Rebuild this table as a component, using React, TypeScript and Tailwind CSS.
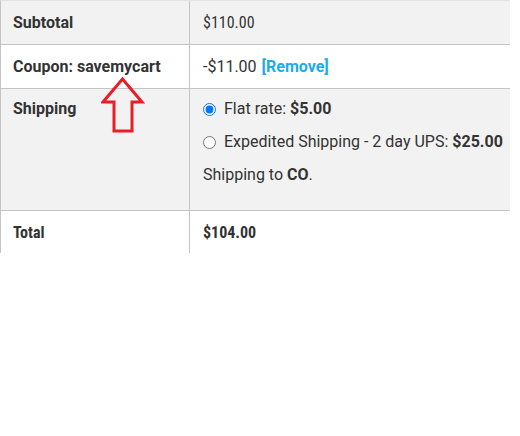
import React from "react";

const cond = { fontFamily: '"Liberation Sans Narrow", "Roboto Condensed", Roboto, sans-serif' };

export default function App() {
  return (
    <div className="w-[520px] h-[436px] bg-white" style={{ fontFamily: 'Roboto, "Liberation Sans", sans-serif' }}>
      <div className="relative w-[510px] h-[253px] overflow-hidden border-l border-t border-[#e3e3e3] border-l-[#c4c4c4]">
        {/* Subtotal */}
        <div className="flex h-[44px] bg-[#f2f2f2] border-b border-[#c4c4c4]">
          <div className="w-[189px] border-r border-[#c4c4c4] pl-[12px] flex items-center text-[16px] font-bold text-[#333]">Subtotal</div>
          <div className="flex-1 pl-[13px] flex items-center text-[16px] text-[#333]" style={cond}>$110.00</div>
        </div>
        {/* Coupon */}
        <div className="flex h-[44px] bg-white border-b border-[#c4c4c4]">
          <div className="w-[189px] border-r border-[#c4c4c4] pl-[12px] flex items-center text-[16px] font-bold text-[#333]">Coupon: savemycart</div>
          <div className="flex-1 pl-[13px] flex items-center text-[16px] text-[#333] gap-[5px]">
            <span>-$11.00</span>
            <a className="font-bold text-[#1badea]">[Remove]</a>
          </div>
        </div>
        {/* Shipping */}
        <div className="flex h-[122px] bg-[#f2f2f2] border-b border-[#c4c4c4]">
          <div className="w-[189px] border-r border-[#c4c4c4] pl-[12px] pt-[8px] text-[16px] font-bold text-[#333]">Shipping</div>
          <div className="flex-1 pl-[13px] pt-[8px] text-[16px] text-[#333] flex flex-col">
            <label className="flex items-center h-[24px] gap-[8px]">
              <input type="radio" name="ship" defaultChecked className="m-0 w-[13px] h-[13px]" />
              <span>Flat rate: <b>$5.00</b></span>
            </label>
            <label className="flex items-center h-[24px] mt-[9px] gap-[8px]">
              <input type="radio" name="ship" className="m-0 w-[13px] h-[13px]" />
              <span>Expedited Shipping - 2 day UPS: <b>$25.00</b></span>
            </label>
            <div className="h-[24px] mt-[9px] flex items-center">
              <span>Shipping to <b>CO</b>.</span>
            </div>
          </div>
        </div>
        {/* Total */}
        <div className="flex h-[44px] bg-white">
          <div className="w-[189px] border-r border-[#c4c4c4] pl-[12px] flex items-center text-[16px] font-bold text-[#333]" style={cond}>Total</div>
          <div className="flex-1 pl-[13px] flex items-center text-[16px] font-bold text-[#333]" style={cond}>$104.00</div>
        </div>

        {/* Red arrow overlay */}
        <svg className="absolute left-[100px] top-[76px]" width="44" height="57" viewBox="0 0 44 57">
          <path
            d="M21.5 2 L41 25 L31 25 L31 54 L13 54 L13 25 L2 25 Z"
            fill="none"
            stroke="#ec1c24"
            strokeWidth="3"
            strokeLinejoin="miter"
          />
        </svg>
      </div>
    </div>
  );
}
